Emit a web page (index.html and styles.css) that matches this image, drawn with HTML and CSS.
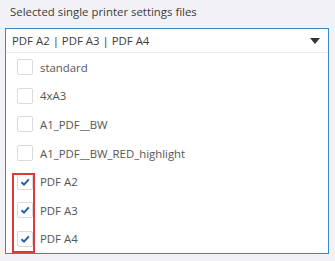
FILE: index.html
```html
<!DOCTYPE html>
<html lang="en">
<head>
    <meta charset="UTF-8">
    <meta name="viewport" content="width=device-width, initial-scale=1.0">
    <title>Printer settings</title>
    <link rel="stylesheet" href="styles.css">
</head>
<body>
    <div class="field">
        <label class="field-label">Selected single printer settings files</label>
        <div class="dropdown">
            <div class="dropdown-head">
                <span class="dropdown-value">PDF A2 | PDF A3 | PDF A4</span>
                <span class="arrow"></span>
            </div>
            <ul class="options">
                <li class="option"><span class="check"></span>standard</li>
                <li class="option"><span class="check"></span>4xA3</li>
                <li class="option"><span class="check"></span>A1_PDF__BW</li>
                <li class="option"><span class="check"></span>A1_PDF__BW_RED_highlight</li>
                <li class="option checked"><span class="check"><svg viewBox="0 0 16 16" width="16" height="16"><path d="M4.5 8.2 L7 10.6 L11.8 5.4" fill="none" stroke="#1f5fa6" stroke-width="2"/></svg></span>PDF A2</li>
                <li class="option checked"><span class="check"><svg viewBox="0 0 16 16" width="16" height="16"><path d="M4.5 8.2 L7 10.6 L11.8 5.4" fill="none" stroke="#1f5fa6" stroke-width="2"/></svg></span>PDF A3</li>
                <li class="option checked"><span class="check"><svg viewBox="0 0 16 16" width="16" height="16"><path d="M4.5 8.2 L7 10.6 L11.8 5.4" fill="none" stroke="#1f5fa6" stroke-width="2"/></svg></span>PDF A4</li>
            </ul>
            <div class="highlight"></div>
        </div>
    </div>
</body>
</html>
```

FILE: styles.css
```css
body {
    margin: 0;
    background-color: #f2f2f6;
    font-family: "Open Sans", "Noto Sans", sans-serif;
    font-size: 11.4px;
    color: #444;
}
.field {
    padding: 4px 6px 0 5px;
}
.field-label {
    display: block;
    padding-left: 5px;
    height: 24px;
    line-height: 16px;
    color: #3a3a3a;
}
.dropdown {
    position: relative;
    background-color: #fff;
    border: 1px solid #3d86c6;
}
.dropdown-head {
    display: flex;
    align-items: center;
    justify-content: space-between;
    height: 23px;
    padding: 0 8px 0 6px;
    border-bottom: 1px solid #eeeeee;
    color: #3c3c3c;
}
.arrow {
    width: 0;
    height: 0;
    border-left: 5px solid transparent;
    border-right: 5px solid transparent;
    border-top: 6px solid #333;
}
.options {
    list-style: none;
    margin: 0;
    padding: 0;
}
.option {
    display: flex;
    align-items: center;
    gap: 7px;
    height: 28.6px;
    padding-left: 11px;
    color: #555;
}
.check {
    width: 16px;
    height: 16px;
    box-sizing: border-box;
    border: 1px solid #dadada;
    border-radius: 2px;
    display: flex;
    align-items: center;
    justify-content: center;
}
.check svg {
    flex: none;
}
.highlight {
    position: absolute;
    left: 6px;
    top: 144px;
    width: 19px;
    height: 76px;
    border: 2px solid #e0393a;
}
```
